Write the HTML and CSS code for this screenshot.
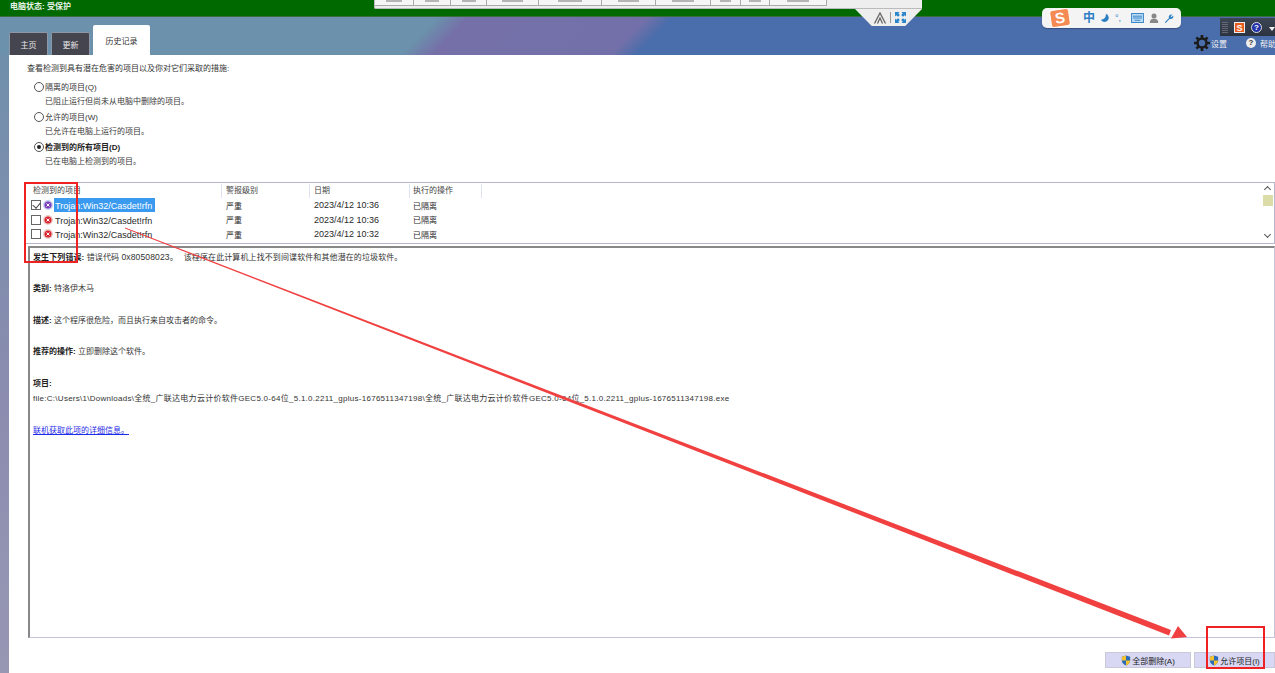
FILE: index.html
```html
<!DOCTYPE html>
<html lang="zh-CN">
<head>
<meta charset="utf-8">
<title>历史记录</title>
<link rel="stylesheet" href="styles.css">
</head>
<body>
<div class="app">
  <header class="status"><span>电脑状态: 受保护</span></header>
  <div class="banner">
    <nav class="tabs">
      <span class="tab">主页</span>
      <span class="tab">更新</span>
      <span class="tab active">历史记录</span>
    </nav>
    <div class="links">
      <span class="link">
        <svg class="gear" viewBox="0 0 20 20"><circle cx="10" cy="10" r="5.6" fill="none" stroke="#1c1c1c" stroke-width="3.2"/><path d="M10 0v4M10 16v4M0 10h4M16 10h4M3 3l2.800 2.800M14.200 14.200 17 17M3 17l2.800-2.800M14.200 5.800 17 3" stroke="#1c1c1c" stroke-width="3.400"/></svg>
        设置
      </span>
      <span class="link"><i class="help">?</i>帮助</span>
    </div>
  </div>
  <main class="main">
    <div class="content">
      <p class="intro">查看检测到具有潜在危害的项目以及你对它们采取的措施:</p>
      <div class="options">
        <div class="opt"><i class="radio"></i><span>隔离的项目(Q)</span></div>
        <p class="desc">已阻止运行但尚未从电脑中删除的项目。</p>
        <div class="opt"><i class="radio"></i><span>允许的项目(W)</span></div>
        <p class="desc">已允许在电脑上运行的项目。</p>
        <div class="opt strong"><i class="radio on"></i><span>检测到的所有项目(D)</span></div>
        <p class="desc">已在电脑上检测到的项目。</p>
      </div>
      <section class="list">
        <div class="row head">
          <span class="c1">检测到的项目</span><span class="c2">警报级别</span><span class="c3">日期</span><span class="c4">执行的操作</span>
        </div>
        <div class="row">
          <span class="c1 name"><i class="check on"></i><svg class="threat" viewBox="0 0 10 10"><circle cx="5" cy="5" r="5" fill="#c4cdf0"/><circle cx="5" cy="5" r="3.500" fill="#7a3fb8"/><path d="M3.500 3.500l3 3M6.500 3.500l-3 3" stroke="#fff" stroke-width="1"/></svg><b class="selected">Trojan:Win32/Casdet!rfn</b></span><span class="c2">严重</span><span class="c3 date">2023/4/12 10:36</span><span class="c4">已隔离</span>
        </div>
        <div class="row">
          <span class="c1 name"><i class="check"></i><svg class="threat" viewBox="0 0 10 10"><circle cx="5" cy="5" r="5" fill="#eccccc"/><circle cx="5" cy="5" r="3.500" fill="#d8242c"/><path d="M3.500 3.500l3 3M6.500 3.500l-3 3" stroke="#fff" stroke-width="1"/></svg><b>Trojan:Win32/Casdet!rfn</b></span><span class="c2">严重</span><span class="c3 date">2023/4/12 10:36</span><span class="c4">已隔离</span>
        </div>
        <div class="row">
          <span class="c1 name"><i class="check"></i><svg class="threat" viewBox="0 0 10 10"><circle cx="5" cy="5" r="5" fill="#eccccc"/><circle cx="5" cy="5" r="3.500" fill="#d8242c"/><path d="M3.500 3.500l3 3M6.500 3.500l-3 3" stroke="#fff" stroke-width="1"/></svg><b>Trojan:Win32/Casdet!rfn</b></span><span class="c2">严重</span><span class="c3 date">2023/4/12 10:32</span><span class="c4">已隔离</span>
        </div>
        <div class="scroll"><span class="up"></span><span class="thumb"></span><span class="down"></span></div>
      </section>
      <section class="detail">
        <p class="first"><strong>发生下列错误:</strong> 错误代码 <span class="code">0x80508023。</span> 该程序在此计算机上找不到间谍软件和其他潜在的垃圾软件。</p>
        <p><strong>类别:</strong> 特洛伊木马</p>
        <p><strong>描述:</strong> 这个程序很危险，而且执行来自攻击者的命令。</p>
        <p><strong>推荐的操作:</strong> 立即删除这个软件。</p>
        <p class="tight"><strong>项目:</strong></p>
        <p class="path">file:C:\Users\1\Downloads\全统_广联达电力云计价软件GEC5.0-64位_5.1.0.2211_gplus-1676511347198\全统_广联达电力云计价软件GEC5.0-64位_5.1.0.2211_gplus-1676511347198.exe</p>
        <p><a href="#">联机获取此项的详细信息。</a></p>
      </section>
      <footer class="actions">
        <button class="btn"><svg class="shield" viewBox="0 0 12 13"><path d="M6 .5 11 2v4.500c0 3-2.300 5-5 6-2.700-1-5-3-5-6V2z" fill="#2b6cb8"/><path d="M6 .5V6.500H1V2zM6 6.500h5c0 3-2.300 5-5 6z" fill="#f2c230"/></svg>全部删除(A)</button>
        <button class="btn"><svg class="shield" viewBox="0 0 12 13"><path d="M6 .5 11 2v4.500c0 3-2.300 5-5 6-2.700-1-5-3-5-6V2z" fill="#2b6cb8"/><path d="M6 .5V6.500H1V2zM6 6.500h5c0 3-2.300 5-5 6z" fill="#f2c230"/></svg>允许项目(I)</button>
      </footer>
    </div>
  </main>
</div>

<div class="remote">
  <div class="remote-tools"><i></i><i></i><i></i><i></i><i></i><i></i><i></i><i></i><i></i><i></i></div>
  <div class="remote-tab">
    <svg class="peak" viewBox="0 0 12 12"><path d="M.5 11.500 6 1l5.500 10.500M3.500 11.500 6 6l2.500 5.500" fill="none" stroke="#666" stroke-width="1.300"/></svg>
    <i class="sep"></i>
    <svg class="expand" viewBox="0 0 11 11"><path d="M0 0h4.500L3.300 1.200 4.800 3 3 4.800 1.200 3.300 0 4.500zM11 0v4.500L9.800 3.300 8 4.800 6.200 3l1.500-1.800L6.500 0zM0 11V6.500l1.200 1.200L3 6.200 4.800 8 3.300 9.800 4.500 11zM11 11H6.500l1.200-1.200L6.200 8 8 6.200l1.800 1.500L11 6.500z" fill="#2a86c8"/></svg>
  </div>
</div>

<div class="ime">
  <span class="ime-s">S</span>
  <span class="ime-zh">中</span>
  <svg class="ime-i" viewBox="0 0 12 12"><path d="M7 1a5 5 0 1 1-6 7 6 6 0 0 0 6-7z" fill="#2d7fc4"/></svg>
  <span class="ime-dot">°,</span>
  <svg class="ime-k" viewBox="0 0 14 11"><rect x=".5" y=".5" width="13" height="10" fill="#bcdcf4" stroke="#2d7fc4"/><path d="M2 3.500h10M2 5.500h10M4 8h6" stroke="#2d7fc4"/></svg>
  <svg class="ime-i" viewBox="0 0 12 12"><circle cx="6" cy="3.500" r="3" fill="#888"/><path d="M1 12c0-4 2-5 5-5s5 1 5 5z" fill="#888"/></svg>
  <svg class="ime-i" viewBox="0 0 12 12"><path d="M1 11 6 6a3 3 0 0 1 4-4L8 4l1 1 2-2a3 3 0 0 1-4 4l-5 5z" fill="#2d7fc4"/></svg>
</div>

<div class="tray">
  <i class="tray-grip"></i><span class="tray-s">S</span><i class="tray-q">?</i><i class="tray-arrow"></i>
</div>

<i class="mark mark-a"></i>
<i class="mark mark-b"></i>
<svg class="arrow" viewBox="0 0 1275 673">
  <path d="M125 227.500 1171 630 1169 635.500 125 228.500z" fill="#f04040"/>
  <path d="M1187 637 1171 638.500 1178 626z" fill="#f04040"/>
</svg>
</body>
</html>
```

FILE: styles.css
```css
* { box-sizing: border-box; }
html, body { margin: 0; height: 673px; overflow: hidden; background: #fff; }
body { font-family: "Liberation Sans", "Noto Sans CJK SC", sans-serif; font-size: 8px; color: #222; position: relative; }
p { margin: 0; }
i { font-style: normal; display: block; }

.app { display: flex; flex-direction: column; height: 673px; background: linear-gradient(180deg, #6b90aa 0, #8c8cb0 60%, #9797b4 100%); }
.status { height: 17px; flex: none; background: #006a00; border-bottom: 1px solid #3c6b3c; color: #e8f4e8; padding: 0 0 0 10px; line-height: 13px; font-weight: 700; }
.banner { height: 38px; flex: none; display: flex; justify-content: space-between; align-items: flex-end;
  background: linear-gradient(135deg, #6b91ac 0, #6b91ac 310px, #7570a8 332px, #7370a9 458px, #4a6dab 476px, #4a6dab 100%); }
.tabs { display: flex; gap: 3px; padding-left: 9px; align-items: flex-end; }
.tab { width: 39px; height: 23px; background: #45454f; border: 1px solid #8d97a5; border-bottom: 0; color: #e8e8e8; display: flex; align-items: center; justify-content: center; border-radius: 2px 2px 0 0; }
.tab.active { width: 57px; height: 30px; background: #fff; border: 0; color: #333; padding-top: 1px; }
.links { display: flex; align-items: center; gap: 19px; height: 24px; width: 81px; white-space: nowrap; }
.link { display: flex; align-items: center; gap: 1px; color: #f0f0f0; }
.gear { width: 16px; height: 16px; }
.help { width: 10px; height: 10px; border-radius: 50%; background: #eee; color: #333; font-size: 8px; line-height: 10px; text-align: center; font-weight: 700; margin-right: 3px; }

.main { flex: 1; padding-left: 9px; min-height: 0; }
.content { height: 100%; background: #fff; padding: 7px 0 0 18px; display: flex; flex-direction: column; }
.intro { height: 13px; line-height: 13px; color: #333; }
.options { padding: 4px 0 0 7px; }
.opt { display: flex; align-items: center; gap: 1px; height: 15px; color: #333; }
.opt.strong { font-weight: 700; color: #222; }
.radio { width: 10px; height: 10px; border: 1px solid #555; border-radius: 50%; background: #fff; position: relative; flex: none; }
.radio.on::after { content: ""; position: absolute; left: 2px; top: 2px; width: 4px; height: 4px; border-radius: 50%; background: #222; }
.desc { height: 15px; line-height: 15px; padding-left: 11px; color: #3a3a3a; }

.list { position: relative; margin: 13px 0 0 -2px; height: 62px; border: 1px solid #b6b6cc; background: #fff; }
.row { display: flex; height: 14.500px; align-items: center; color: #2a2a2a; white-space: nowrap; }
.row.head { height: 15px; color: #444; }
.row.head span { height: 14px; line-height: 14px; border-right: 1px solid #dfe3f2; }
.row.head .c1 { padding-left: 7px; }
.c1 { width: 196px; flex: none; }
.c2 { width: 88px; flex: none; padding-left: 4px; }
.c3 { width: 100px; flex: none; padding-left: 4px; }
.c4 { width: 72px; flex: none; padding-left: 3px; }
.date { font-size: 9px; }
.name { display: flex; align-items: center; padding-left: 5px; }
.name b { font-weight: 400; font-size: 9px; padding: 2px 3px 0 1px; line-height: 12px; }
.name b.selected { background: #3a9af0; color: #fff; }
.check { width: 10px; height: 10px; border: 1px solid #666; background: #fff; margin-right: 2px; position: relative; flex: none; }
.check.on::after { content: ""; position: absolute; left: 2px; top: 0; width: 4px; height: 6px; border: solid #444; border-width: 0 1px 1px 0; transform: rotate(40deg); }
.threat { width: 10px; height: 10px; flex: none; margin-right: 1px; }
.scroll { position: absolute; top: 0; right: 0; width: 13px; height: 100%; display: flex; flex-direction: column; align-items: center; padding: 4px 0; }
.up, .down { width: 5px; height: 5px; border: solid #555; border-width: 1.500px 0 0 1.500px; transform: rotate(45deg); flex: none; }
.down { transform: rotate(225deg); margin-top: auto; margin-bottom: 2px; }
.thumb { width: 10px; height: 11px; background: #dcdca8; margin-top: 3px; }

.detail { flex: none; height: 392px; margin: 2px 0 0 1px; border: 1px solid #c4c4d8; border-top: 2px solid #888; border-left: 2px solid #888; padding: 1.500px 3px; color: #333; line-height: 14px; }
.detail p { margin-bottom: 17.500px; white-space: nowrap; }
.detail strong { color: #222; }
.detail p.first { letter-spacing: .1px; }
.code { font-size: 8.600px; margin-right: 3px; }
.detail p.path { letter-spacing: .27px; }
.detail p.tight { margin-bottom: 1.500px; }
.detail a { color: #1f2be8; }

.actions { display: flex; justify-content: flex-end; gap: 3px; margin-top: 14px; }
.btn { width: 86px; height: 16px; padding: 0; display: flex; align-items: center; justify-content: center; gap: 1px; font: inherit; color: #222; background: #d8d8f4; border: 1px solid #c8c8d8; }
.actions .btn:last-child { width: 81px; }
.shield { width: 10px; height: 11px; }

.remote { position: absolute; top: 0; left: 374px; width: 548px; }
.remote-tools { height: 9px; background: #eee; border: 1px solid #bbb; border-top: 0; border-right: 0; display: flex; width: 548px; border-radius: 0 0 0 2px; }
.remote-tools i { height: 6px; border-right: 1px solid #aaa; border-bottom: 1px solid #aaa; background: #f6f6f6; flex: none; width: 39px; position: relative; }
.remote-tools i::after { content: ""; position: absolute; left: 30%; right: 30%; top: 0; height: 2px; background: #8a8a8a; opacity: .6; }
.remote-tools i:nth-child(2) { width: 37px; }
.remote-tools i:nth-child(3) { width: 36px; }
.remote-tools i:nth-child(4) { width: 52px; }
.remote-tools i:nth-child(5) { width: 63px; }
.remote-tools i:nth-child(6) { width: 54px; }
.remote-tools i:nth-child(7) { width: 55px; }
.remote-tools i:nth-child(8) { width: 30px; }
.remote-tools i:nth-child(9) { width: 29px; }
.remote-tools i:last-child { width: 57px; }
.remote-tab { position: absolute; left: 481px; top: 9px; width: 67px; height: 17px; background: #eee; clip-path: polygon(0 0, 100% 0, 75% 100%, 25% 100%); display: flex; align-items: center; justify-content: center; gap: 4px; padding-left: 2px; }
.peak { width: 12px; height: 12px; }
.sep { width: 1px; height: 11px; background: #999; }
.expand { width: 11px; height: 11px; }

.ime { position: absolute; left: 1042px; top: 8px; width: 139px; height: 20px; background: #f4f4f4; border-radius: 5px; display: flex; align-items: center; gap: 5px; padding-left: 8px; box-shadow: 0 1px 1px rgba(0,0,0,.25); }
.ime-s { width: 20px; height: 18px; background: #f58a52; color: #fff; border: 1px solid #fff; font: 700 15px/16px "Liberation Sans", sans-serif; text-align: center; border-radius: 3px; transform: rotate(-8deg); margin-right: 8px; flex: none; }
.ime-zh { color: #2d7fc4; font-size: 12px; font-weight: 700; line-height: 14px; }
.ime-i { width: 10px; height: 10px; flex: none; }
.ime-dot { color: #2d7fc4; font-size: 9px; }
.ime-k { width: 13px; height: 10px; flex: none; margin-left: 5px; }

.tray { position: absolute; top: 18px; left: 1220px; width: 55px; height: 18px; background: linear-gradient(180deg, #3c4654, #2c3340); display: flex; align-items: center; gap: 6px; padding-left: 2px; }
.tray-grip { width: 6px; height: 12px; background: repeating-linear-gradient(0deg, #667 0 1px, transparent 1px 2px); flex: none; }
.tray-s { width: 11px; height: 11px; background: #e85c20; color: #fff; font: 700 9px/10px "Liberation Sans", sans-serif; text-align: center; border: 1px solid #eee; flex: none; }
.tray-q { width: 11px; height: 11px; border-radius: 50%; background: #2232a8; border: 1px solid #ddd; color: #fff; font: 700 8px/9px "Liberation Sans", sans-serif; text-align: center; flex: none; }
.tray-arrow { width: 0; height: 0; border: 3px solid transparent; border-top: 4px solid #eee; margin-top: 6px; margin-left: 1px; flex: none; }

.mark { position: absolute; border: 2px solid #ee2222; }
.mark-a { left: 24px; top: 182px; width: 54px; height: 81px; }
.mark-b { left: 1206px; top: 626px; width: 59px; height: 43px; }
.arrow { position: absolute; inset: 0; width: 1275px; height: 673px; pointer-events: none; }
```
